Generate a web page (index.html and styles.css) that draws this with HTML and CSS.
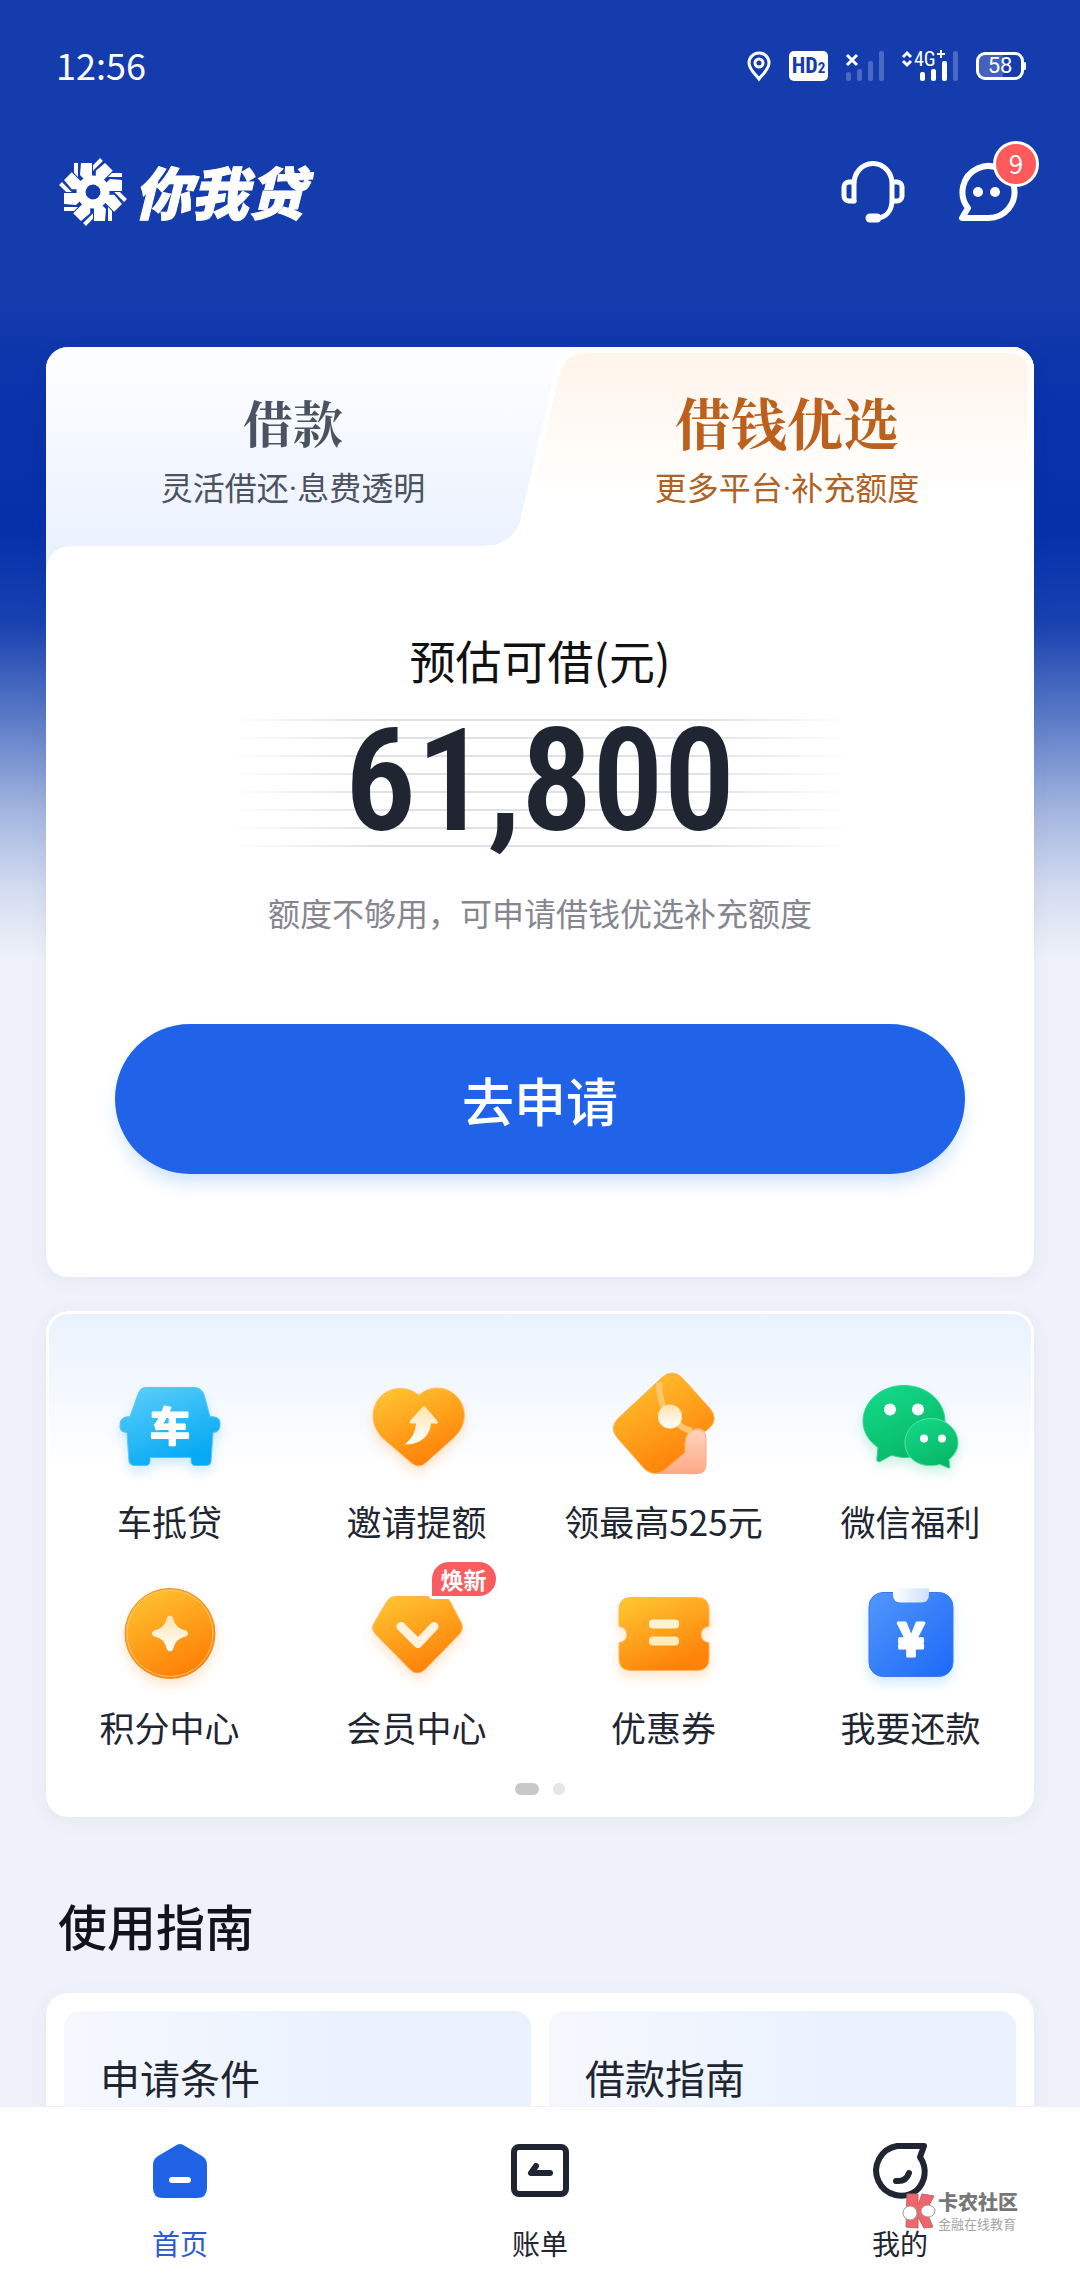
FILE: index.html
```html
<!DOCTYPE html>
<html lang="zh-CN">
<head>
    <meta charset="UTF-8">
    <meta name="viewport" content="width=device-width, initial-scale=1.0">
    <title>你我贷</title>
    <link rel="stylesheet" href="styles.css">
</head>
<body>
    <main class="screen">
        <div class="status-bar">
            <span class="time">12:56</span>
            <div class="status-icons">
                <svg width="24" height="30" viewBox="0 0 24 30" fill="none" stroke="#fff" stroke-width="3">
                    <path d="M12 28C8 23 2 18 2 12a10 10 0 0 1 20 0c0 6-6 11-10 16z"/>
                    <circle cx="12" cy="12" r="4"/>
                </svg>
                <span class="hd">HD<small>2</small></span>
                <svg width="38" height="30" viewBox="0 0 38 30">
                    <path d="M1 4l10 10M11 4l-10 10" stroke="#fff" stroke-width="3"/>
                    <g fill="#4a69c6">
                        <rect x="0" y="21" width="5" height="9" rx="2"/>
                        <rect x="11" y="18" width="5" height="12" rx="2"/>
                        <rect x="22" y="10" width="5" height="20" rx="2"/>
                        <rect x="33" y="0" width="5" height="30" rx="2"/>
                    </g>
                </svg>
                <svg class="signal" width="56" height="30" viewBox="0 0 56 30">
                    <path d="M1 6l4-4 4 4M1 10l4 4 4-4" fill="none" stroke="#fff" stroke-width="3"/>
                    <text x="12" y="15">4G</text>
                    <path d="M35 3h8M39 -1v8" stroke="#fff" stroke-width="2"/>
                    <g fill="#fff">
                        <rect x="18" y="21" width="5" height="9" rx="2"/>
                        <rect x="29" y="18" width="5" height="12" rx="2"/>
                        <rect x="40" y="10" width="5" height="20" rx="2"/>
                    </g>
                    <rect x="51" y="0" width="5" height="30" rx="2" fill="#4a69c6"/>
                </svg>
                <span class="battery">58</span>
            </div>
        </div>

        <header class="header">
            <a class="brand" href="#">
                <svg width="70" height="70" viewBox="-35 -35 70 70" fill="#fff">
                    <defs>
                        <path id="arm" d="M-12-29H-1V-7H-3L-13-17zM-19-29h4v14l-4-4z"/>
                    </defs>
                    <circle r="12" fill="none" stroke="#fff" stroke-width="9"/>
                    <use href="#arm"/>
                    <use href="#arm" transform="rotate(45)"/>
                    <use href="#arm" transform="rotate(90)"/>
                    <use href="#arm" transform="rotate(135)"/>
                    <use href="#arm" transform="rotate(180)"/>
                    <use href="#arm" transform="rotate(225)"/>
                    <use href="#arm" transform="rotate(270)"/>
                    <use href="#arm" transform="rotate(315)"/>
                </svg>
                <span>你我贷</span>
            </a>
            <div class="header-actions">
                <button class="icon-button" aria-label="客服">
                    <svg width="64" height="62" viewBox="0 0 64 62" fill="none" stroke="#fff" stroke-width="5" stroke-linecap="round" stroke-linejoin="round">
                        <path d="M13 40V23a19 20 0 0 1 38-1v17c0 11-6 17-14 18"/>
                        <path d="M13 21H8a5 5 0 0 0-5 5v9a5 5 0 0 0 5 5h5M52 21h4a5 5 0 0 1 5 5v9a5 5 0 0 1-5 5h-4"/>
                        <path d="M29 57h7" stroke-width="9"/>
                    </svg>
                </button>
                <button class="icon-button" aria-label="消息">
                    <svg width="60" height="60" viewBox="0 0 60 60" fill="none" stroke="#fff" stroke-width="6" stroke-linejoin="round">
                        <path d="M5 56h26a26 26 0 1 0-20-10z"/>
                        <circle cx="21" cy="30" r="5" fill="#fff" stroke="none"/>
                        <circle cx="38" cy="30" r="5" fill="#fff" stroke="none"/>
                    </svg>
                    <span class="count">9</span>
                </button>
            </div>
        </header>

        <section class="card loan-card">
            <div class="tabs">
                <svg class="tabs-bg" viewBox="0 0 988 230" preserveAspectRatio="none">
                    <defs>
                        <linearGradient id="tab-blue" x1="0" y1="0" x2="0" y2="1">
                            <stop offset="0" stop-color="#fdfeff"/>
                            <stop offset="1" stop-color="#e8f0fe"/>
                        </linearGradient>
                        <linearGradient id="tab-orange" x1="0" y1="0" x2="0" y2="1">
                            <stop offset="0" stop-color="#fff4ea"/>
                            <stop offset="1" stop-color="#fff"/>
                        </linearGradient>
                    </defs>
                    <rect width="988" height="230" fill="url(#tab-blue)"/>
                    <path d="M0 230C0 210 8 199 26 199H436Q466 199 474 174L509 24Q514 0 536 0H988V230z" fill="#fff"/>
                    <path d="M484 150L514 28Q519 6 540 6H962Q982 6 982 28V150z" fill="url(#tab-orange)"/>
                </svg>
                <button class="tab">
                    <strong>借款</strong>
                    <span>灵活借还·息费透明</span>
                </button>
                <button class="tab tab-active">
                    <strong>借钱优选</strong>
                    <span>更多平台·补充额度</span>
                </button>
            </div>
            <div class="quota">
                <h2>预估可借(元)</h2>
                <p class="amount">61,800</p>
                <p class="hint">额度不够用，可申请借钱优选补充额度</p>
                <button class="apply">去申请</button>
            </div>
        </section>

        <section class="card services">
            <svg class="defs" width="0" height="0">
                <defs>
                    <linearGradient id="gold" x1="0" y1="0" x2="0.500" y2="1">
                        <stop offset="0" stop-color="#ffc933"/>
                        <stop offset="1" stop-color="#ff8209"/>
                    </linearGradient>
                    <linearGradient id="sky" x1="0" y1="0" x2="0.500" y2="1">
                        <stop offset="0" stop-color="#5fd0fb"/>
                        <stop offset="1" stop-color="#07a9f4"/>
                    </linearGradient>
                    <linearGradient id="green" x1="0" y1="0" x2="0.500" y2="1">
                        <stop offset="0" stop-color="#14dc8b"/>
                        <stop offset="1" stop-color="#07b868"/>
                    </linearGradient>
                    <linearGradient id="blue" x1="0" y1="0" x2="1" y2="1">
                        <stop offset="0" stop-color="#5197fb"/>
                        <stop offset="1" stop-color="#1c68f8"/>
                    </linearGradient>
                    <linearGradient id="pink" x1="0" y1="0" x2="0" y2="1">
                        <stop offset="0" stop-color="#ffd2bd"/>
                        <stop offset="1" stop-color="#fdaa87"/>
                    </linearGradient>
                    <linearGradient id="cream" x1="0" y1="0" x2="0" y2="1">
                        <stop offset="0" stop-color="#ffe3ae"/>
                        <stop offset="1" stop-color="#fff"/>
                    </linearGradient>
                    <linearGradient id="clip" x1="0" y1="0" x2="1" y2="0">
                        <stop offset="0" stop-color="#fff"/>
                        <stop offset="1" stop-color="#cfdffc"/>
                    </linearGradient>
                </defs>
            </svg>
            <div class="service-grid">
                <a class="service" href="#">
                    <svg class="service-icon shade-blue" viewBox="-60 -60 120 120">
                        <path d="M-24-40H24Q31-40 34-33L40-11Q50-11 50-5Q51 5 43 5L41 34Q41 38 37 38H25Q21 38 21 33V30H-20V33Q-20 38-24 38H-36Q-40 38-41 34L-43 5Q-51 5-50-3Q-50-11-40-11L-32-33Q-30-40-24-40z" fill="url(#sky)" stroke="#59c5f7"/>
                        <text class="glyph" x="0" y="13" font-size="40">车</text>
                    </svg>
                    <span>车抵贷</span>
                </a>
                <a class="service" href="#">
                    <svg class="service-icon shade-gold" viewBox="-60 -60 120 120">
                        <path d="M2-32C14-44 34-41 43-27C52-12 46 2 36 11L8 36Q2 41-5 36L-34 11C-43 2-48-12-40-26C-31-41-10-43 2-32z" fill="url(#gold)" stroke="#ffbd66"/>
                        <path d="M5-20Q7-23 9-20L20-7Q22-3 18-4L14-4C13 8 4 17-12 17C-5 10-2 6-1-4H-5Q-9-4-6-8z" fill="url(#cream)"/>
                    </svg>
                    <span>邀请提额</span>
                </a>
                <a class="service" href="#">
                    <svg class="service-icon" viewBox="-60 -60 120 120">
                        <path d="M-9 46L21 12V10Q24 2 33 2Q42 2 42 11V37Q42 46 33 46z" fill="url(#pink)" stroke="#f7a786"/>
                        <path d="M-2-50Q8-59 18-50L46-19Q55-8 45 1L41 4Q38 1 32 1Q21 4 21 16V25L1 42Q-9 50-19 42L-47 10Q-55 0-46-9z" fill="url(#gold)" stroke="#ffb354"/>
                        <path d="M-5-45C-5-30 0-15 6-11C15-3 20 3 28 3" fill="none" stroke="#ffc76c" stroke-width="6"/>
                        <circle cx="6" cy="-11" r="12" fill="url(#cream)"/>
                    </svg>
                    <span>领最高525元</span>
                </a>
                <a class="service" href="#">
                    <svg class="service-icon shade-green" viewBox="-60 -60 120 120">
                        <path d="M-7-42C16-42 34-26 34-6S16 30-7 30C-13 30-16 28-20 28L-31 34Q-35 35-34 30L-33 20C-42 14-48 4-48-6C-48-26-30-42-7-42z" fill="url(#green)" stroke="#34d397"/>
                        <path d="M20-9C35-9 47 2 47 15C47 23 43 28 38 32L39 39Q39 42 36 40L29 37C9 42-6 31-6 15C-6 2 5-9 20-9z" fill="url(#green)" stroke="#5fe0ac"/>
                        <g fill="#fff">
                            <circle cx="-21" cy="-18" r="6"/>
                            <circle cx="7" cy="-18" r="6"/>
                            <circle cx="13" cy="11" r="4"/>
                            <circle cx="31" cy="11" r="4"/>
                        </g>
                    </svg>
                    <span>微信福利</span>
                </a>
                <a class="service" href="#">
                    <svg class="service-icon shade-gold" viewBox="-60 -60 120 120">
                        <circle r="45" fill="url(#gold)" stroke="#f08c2a"/>
                        <circle r="43" fill="none" stroke="#ffc56e"/>
                        <path d="M-3-16Q0-20 3-16C5-8 8-5 16-3Q20 0 16 3C8 5 5 8 3 16Q0 20-3 16C-5 8-8 5-16 3Q-20 0-16-3C-8-5-5-8-3-16z" fill="url(#cream)"/>
                    </svg>
                    <span>积分中心</span>
                </a>
                <a class="service" href="#">
                    <svg class="service-icon shade-gold" viewBox="-60 -60 120 120">
                        <path d="M-22-37H25Q30-37 33-32L44-11Q47-5 43 0L8 36Q0 43-7 36L-42 0Q-46-5-43-10L-30-32Q-27-37-22-37z" fill="url(#gold)" stroke="#ffb354"/>
                        <path d="M-16-7L1 10L17-7" fill="none" stroke="#fff3de" stroke-width="9" stroke-linecap="round" stroke-linejoin="round"/>
                    </svg>
                    <em class="tag">焕新</em>
                    <span>会员中心</span>
                </a>
                <a class="service" href="#">
                    <svg class="service-icon shade-gold" viewBox="-60 -60 120 120">
                        <path d="M-33-36H33Q45-36 45-24V-7A8 8 0 0 0 45 9V25Q45 37 33 37H-33Q-45 37-45 25V9A8 8 0 0 0-45-7V-24Q-45-36-33-36z" fill="url(#gold)" stroke="#ffb65a"/>
                        <rect x="-15" y="-14" width="30" height="9" rx="4" fill="#fff3d4"/>
                        <rect x="-15" y="3" width="30" height="9" rx="4" fill="#ffeebb"/>
                    </svg>
                    <span>优惠券</span>
                </a>
                <a class="service" href="#">
                    <svg class="service-icon shade-blue" viewBox="-60 -60 120 120">
                        <rect x="-42" y="-41" width="84" height="84" rx="14" fill="url(#blue)" stroke="#3b79e6"/>
                        <path d="M-18-45H18V-39Q18-31 10-31H-10Q-18-31-18-39z" fill="url(#clip)"/>
                        <text class="glyph yen" x="0" y="22">¥</text>
                    </svg>
                    <span>我要还款</span>
                </a>
            </div>
            <div class="dots">
                <i class="dot dot-on"></i>
                <i class="dot"></i>
            </div>
        </section>

        <h2 class="section-title">使用指南</h2>
        <section class="card guides">
            <a class="guide" href="#">申请条件</a>
            <a class="guide" href="#">借款指南</a>
        </section>
    </main>

    <nav class="tab-bar">
        <a class="tab-item active" href="#">
            <svg width="56" height="56" viewBox="0 0 56 56">
                <path d="M23 3Q28-1 33 3L50 13Q55 16 55 22V45Q55 55 45 55H11Q1 55 1 45V22Q1 16 6 13z" fill="#2062e6"/>
                <rect x="17" y="34" width="22" height="6" rx="3" fill="#fff"/>
            </svg>
            <span>首页</span>
        </a>
        <a class="tab-item" href="#">
            <svg width="58" height="56" viewBox="0 0 58 56" fill="none" stroke="#1f2632" stroke-width="6" stroke-linecap="round" stroke-linejoin="round">
                <rect x="3" y="4" width="52" height="47" rx="5"/>
                <path d="M25 23L20 30H39"/>
            </svg>
            <span>账单</span>
        </a>
        <a class="tab-item" href="#">
            <svg width="56" height="56" viewBox="0 0 56 56" fill="none" stroke="#1f2632" stroke-width="6" stroke-linecap="round" stroke-linejoin="round">
                <path d="M25 3H52L48 14C56 26 53 39 45 47A25 25 0 1 1 25 3z"/>
                <path d="M24 38Q34 39 37 30"/>
            </svg>
            <span>我的</span>
        </a>
        <div class="watermark">
            <svg width="34" height="36" viewBox="0 0 34 36">
                <path d="M5 1H16V12L20 1L32 3L24 18L31 34L22 35L16 24V35L4 34z" fill="#f0666b" stroke="#b5696c"/>
                <ellipse cx="8" cy="20" rx="7" ry="7" fill="#fff" stroke="#999"/>
                <ellipse cx="26" cy="18" rx="7" ry="6" fill="#fff" stroke="#999"/>
            </svg>
            <div>
                <b>卡农社区</b>
                <small>金融在线教育</small>
            </div>
        </div>
    </nav>
</body>
</html>
```

FILE: styles.css
```css
* {
    box-sizing: border-box;
}

body {
    display: flex;
    flex-direction: column;
    height: 100vh;
    margin: 0;
    font-family: "Noto Sans CJK SC", "Noto Sans", sans-serif;
    background-color: #eff2fa;
    color: #1f2632;
}

h2,
p {
    margin: 0;
}

a {
    color: inherit;
    text-decoration: none;
}

button {
    border: none;
    padding: 0;
    background: none;
    font-family: inherit;
    color: inherit;
    cursor: pointer;
}

svg {
    display: block;
    overflow: visible;
}

.screen {
    flex: 1;
    min-height: 0;
    overflow-y: auto;
    scrollbar-width: none;
    background-image: linear-gradient(#143cac 0, #143cac 290px, #0a32ab 400px, #0630aa 530px, #1740b0 620px, #5c7cc8 720px, #a3b5df 810px, #d4dcf0 890px, #eff2fa 960px);
    background-repeat: no-repeat;
}

/* status bar */
.status-bar {
    display: flex;
    align-items: center;
    justify-content: space-between;
    height: 132px;
    padding: 0 56px 0 56px;
    color: #fff;
}

.time {
    font-size: 36px;
    line-height: 44px;
    margin-bottom: 4px;
}

.status-icons {
    display: flex;
    align-items: center;
    gap: 18px;
}

.hd {
    display: flex;
    align-items: baseline;
    justify-content: center;
    width: 39px;
    height: 30px;
    border-radius: 5px;
    background-color: #fff;
    color: #143cac;
    font-family: "Roboto Condensed", Roboto, sans-serif;
    font-size: 22px;
    font-weight: bold;
    line-height: 30px;
}

.hd small {
    font-size: 15px;
}

.signal text {
    fill: #fff;
    font-family: "Roboto Condensed", Roboto, sans-serif;
    font-size: 20px;
}

.battery {
    position: relative;
    width: 48px;
    height: 28px;
    border: 3px solid #fff;
    border-radius: 9px;
    background: linear-gradient(90deg, #4361bd 58%, transparent 58%);
    font-family: Roboto, sans-serif;
    font-size: 22px;
    line-height: 22px;
    text-align: center;
}

.battery::after {
    content: "";
    position: absolute;
    top: 7px;
    right: -5px;
    width: 3px;
    height: 8px;
    border-radius: 2px;
    background-color: #fff;
}

/* header */
.header {
    display: flex;
    align-items: center;
    justify-content: space-between;
    height: 120px;
    padding: 0 63px 0 58px;
    color: #fff;
}

.brand {
    display: flex;
    align-items: center;
    gap: 6px;
    font-size: 57px;
    font-style: italic;
    font-weight: 900;
    line-height: 64px;
}

.brand span {
    margin-bottom: 4px;
    -webkit-text-stroke: 1px #fff;
}

.header-actions {
    display: flex;
    align-items: center;
    gap: 52px;
}

.icon-button {
    position: relative;
}

.count {
    position: absolute;
    top: -21px;
    right: -22px;
    width: 46px;
    height: 46px;
    border: 3px solid #fff;
    border-radius: 50%;
    background-color: #fd5a5c;
    color: #fff;
    font-size: 26px;
    line-height: 38px;
}

/* loan card */
.card {
    margin: 0 46px;
    border-radius: 22px;
    background-color: #fff;
    box-shadow: 0 4px 20px rgba(60, 60, 90, 0.06);
}

.loan-card {
    margin-top: 95px;
    overflow: hidden;
}

.tabs {
    position: relative;
    display: grid;
    grid-template-columns: 1fr 1fr;
    height: 230px;
}

.tabs-bg {
    position: absolute;
    width: 100%;
    height: 100%;
}

.tab {
    position: relative;
    display: flex;
    flex-direction: column;
    align-items: center;
    padding-top: 41px;
    color: #4b5261;
}

.tab strong {
    font-family: "Noto Serif CJK SC", "Noto Serif SC", "Noto Sans CJK SC", serif;
    font-size: 50px;
    line-height: 66px;
}

/* Roboto comes first for its narrow middle dot */
.tab span {
    margin-top: 15px;
    font-family: Roboto, "Noto Sans CJK SC", sans-serif;
    font-size: 32px;
    line-height: 40px;
}

.tab-active {
    color: #ae6224;
}

.tab-active strong {
    font-size: 56px;
    color: #bc601d;
}

.quota {
    position: relative;
    z-index: 0;
    display: flex;
    flex-direction: column;
    align-items: center;
    padding: 52px 69px 103px;
}

.quota h2 {
    color: #111;
    font-size: 46px;
    font-weight: 400;
    line-height: 60px;
}

.amount {
    position: relative;
    width: 620px;
    max-width: 100%;
    margin-top: 30px;
    font-family: "Roboto Condensed", Roboto, sans-serif;
    font-size: 142px;
    font-weight: 600;
    line-height: 126px;
    text-align: center;
}

/* ruled lines that fade out at both ends */
.amount::before {
    content: "";
    position: absolute;
    inset: 0 0 -2px;
    z-index: -1;
    background: repeating-linear-gradient(#dfe1e3 0, #dfe1e3 2px, transparent 2px, transparent 18px);
    mask-image: linear-gradient(90deg, transparent, #000 25%, #000 75%, transparent);
}

.hint {
    margin-top: 43px;
    color: #85868f;
    font-size: 32px;
    line-height: 48px;
}

.apply {
    width: 100%;
    height: 150px;
    margin-top: 88px;
    border-radius: 75px;
    background-color: #2163e8;
    box-shadow: 0 12px 18px -4px rgba(60, 140, 240, 0.25);
    color: #fff;
    font-size: 52px;
    font-weight: 500;
}

/* services */
.services {
    margin-top: 34px;
    padding: 56px 0 22px;
    background-image: linear-gradient(#e9f2fe, #fff 160px);
    box-shadow: inset 0 0 0 3px #fff, 0 4px 20px rgba(60, 60, 90, 0.06);
}

.defs {
    position: absolute;
}

.service-grid {
    display: grid;
    grid-template-columns: repeat(4, 1fr);
    row-gap: 28px;
}

.service {
    position: relative;
    display: flex;
    flex-direction: column;
    align-items: center;
    gap: 9px;
    font-size: 35px;
    line-height: 48px;
    white-space: nowrap;
}

.service-icon {
    width: 120px;
    height: 121px;
}

.shade-gold {
    filter: drop-shadow(0 6px 6px rgba(255, 150, 50, 0.25));
}

.shade-blue {
    filter: drop-shadow(0 6px 6px rgba(40, 160, 250, 0.22));
}

.shade-green {
    filter: drop-shadow(0 6px 6px rgba(10, 190, 110, 0.2));
}

.glyph {
    fill: #fff;
    stroke: #fff;
    stroke-width: 2px;
    stroke-linejoin: round;
    font-weight: 700;
    text-anchor: middle;
}

.yen {
    font-size: 46px;
    stroke-width: 3px;
}

.tag {
    position: absolute;
    top: -14px;
    left: calc(50% + 12px);
    padding: 0 9px;
    border: 3px solid #fff;
    border-radius: 20px 20px 20px 3px;
    background-color: #fa5d5f;
    color: #fff;
    font-size: 23px;
    font-style: normal;
    font-weight: 700;
    line-height: 34px;
}

.dots {
    display: flex;
    justify-content: center;
    gap: 14px;
    margin-top: 32px;
}

.dot {
    width: 12px;
    height: 12px;
    border-radius: 6px;
    background-color: #e6e6e6;
}

.dot-on {
    width: 24px;
    background-color: #c8c8c8;
}

/* guides */
.section-title {
    margin: 72px 58px 32px;
    color: #12131c;
    font-size: 49px;
    font-weight: 500;
    line-height: 72px;
}

.guides {
    display: grid;
    grid-template-columns: 1fr 1fr;
    gap: 18px;
    margin-bottom: 40px;
    padding: 18px;
}

.guide {
    height: 200px;
    padding: 36px;
    border-radius: 16px;
    background: linear-gradient(90deg, #f6f8fe, #eaf2fe 60%);
    font-size: 40px;
    line-height: 60px;
}

/* bottom tab bar */
.tab-bar {
    position: relative;
    display: grid;
    grid-template-columns: repeat(3, 1fr);
    padding: 36px 0 19px;
    border-top: 1px solid #f0f1f5;
    background-color: #fff;
}

.tab-item {
    display: flex;
    flex-direction: column;
    align-items: center;
    gap: 26px;
    font-size: 28px;
    line-height: 36px;
}

.tab-item.active {
    color: #2a5cd0;
}

.watermark {
    position: absolute;
    top: 82px;
    right: 62px;
    display: flex;
    align-items: center;
    gap: 2px;
}

.watermark b,
.watermark small {
    display: block;
}

.watermark b {
    color: #777;
    font-size: 20px;
    font-weight: 900;
    line-height: 26px;
}

.watermark small {
    color: #a5a5a5;
    font-size: 13px;
    line-height: 18px;
}
```
